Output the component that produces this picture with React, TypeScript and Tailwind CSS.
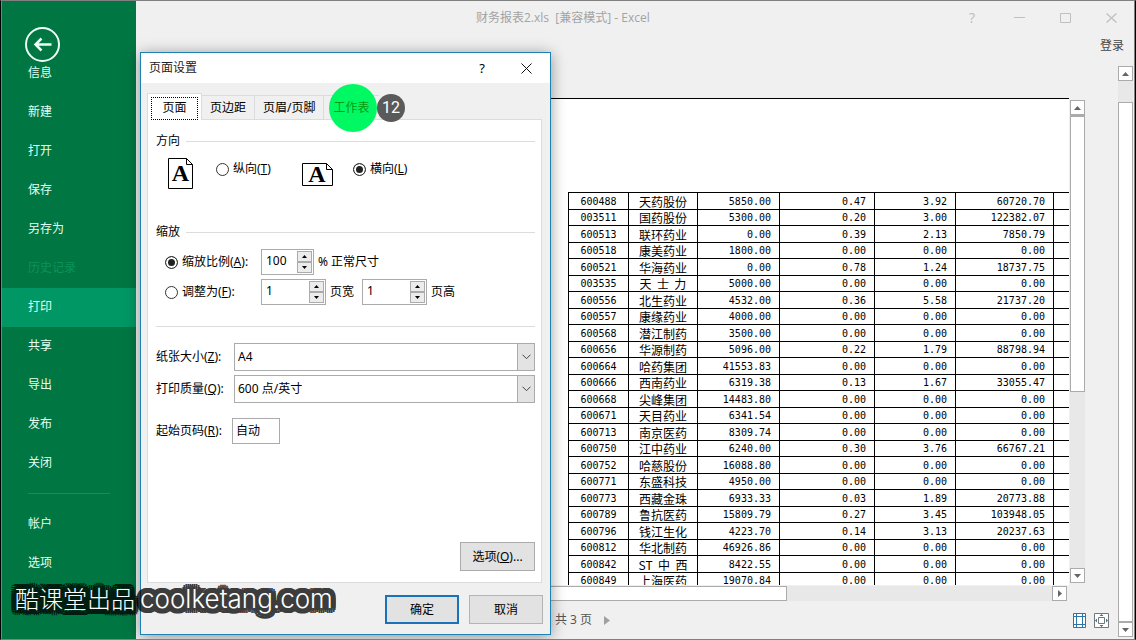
import type { ReactNode } from "react";

const uiFont = "font-['Noto_Sans','Noto_Sans_CJK_SC',sans-serif]";

const menuItems = ["信息", "新建", "打开", "保存", "另存为", "历史记录", "打印", "共享", "导出", "发布", "关闭"];
const footerItems = ["帐户", "选项"];

const rows: string[][] = [
  ["600488", "天药股份", "5850.00", "0.47", "3.92", "60720.70"],
  ["003511", "国药股份", "5300.00", "0.20", "3.00", "122382.07"],
  ["600513", "联环药业", "0.00", "0.39", "2.13", "7850.79"],
  ["600518", "康美药业", "1800.00", "0.00", "0.00", "0.00"],
  ["600521", "华海药业", "0.00", "0.78", "1.24", "18737.75"],
  ["003535", "天  士  力", "5000.00", "0.00", "0.00", "0.00"],
  ["600556", "北生药业", "4532.00", "0.36", "5.58", "21737.20"],
  ["600557", "康缘药业", "4000.00", "0.00", "0.00", "0.00"],
  ["600568", "潜江制药", "3500.00", "0.00", "0.00", "0.00"],
  ["600656", "华源制药", "5096.00", "0.22", "1.79", "88798.94"],
  ["600664", "哈药集团", "41553.83", "0.00", "0.00", "0.00"],
  ["600666", "西南药业", "6319.38", "0.13", "1.67", "33055.47"],
  ["600668", "尖峰集团", "14483.80", "0.00", "0.00", "0.00"],
  ["600671", "天目药业", "6341.54", "0.00", "0.00", "0.00"],
  ["600713", "南京医药", "8309.74", "0.00", "0.00", "0.00"],
  ["600750", "江中药业", "6240.00", "0.30", "3.76", "66767.21"],
  ["600752", "哈慈股份", "16088.80", "0.00", "0.00", "0.00"],
  ["600771", "东盛科技", "4950.00", "0.00", "0.00", "0.00"],
  ["600773", "西藏金珠", "6933.33", "0.03", "1.89", "20773.88"],
  ["600789", "鲁抗医药", "15809.79", "0.27", "3.45", "103948.05"],
  ["600796", "钱江生化", "4223.70", "0.14", "3.13", "20237.63"],
  ["600812", "华北制药", "46926.86", "0.00", "0.00", "0.00"],
  ["600842", "ST  中  西", "8422.55", "0.00", "0.00", "0.00"],
  ["600849", "上海医药", "19070.84", "0.00", "0.00", "0.00"],
];

function Arrow({ dir, className = "" }: { dir: "up" | "down" | "right"; className?: string }) {
  const d = dir === "up" ? "M0 4 3.5 0 7 4z" : dir === "down" ? "M0 0h7L3.5 4z" : "M0 0v7l4-3.5z";
  const size = dir === "right" ? [4, 7] : [7, 4];
  return (
    <svg width={size[0]} height={size[1]} viewBox={`0 0 ${size[0]} ${size[1]}`} className={className}>
      <path d={d} fill="currentColor" />
    </svg>
  );
}

function ScrollButton({ dir, label }: { dir: "up" | "down" | "right"; label: string }) {
  return (
    <button
      type="button"
      aria-label={label}
      className="flex size-[15px] shrink-0 items-center justify-center border border-[#ababab] bg-white text-[#666]"
    >
      <Arrow dir={dir} />
    </button>
  );
}

function Sidebar() {
  return (
    <nav className="flex w-[134px] shrink-0 flex-col bg-[#007643] text-xs text-[#e4fff3]">
      <div className="h-[53px] shrink-0 pt-[26px] pl-[23px]">
        <button type="button" aria-label="返回" className="block">
          <svg width="35" height="35" viewBox="0 0 35 35" fill="none" stroke="#eafff6">
            <circle cx="17.5" cy="17.5" r="16.5" strokeWidth="2" />
            <path d="M26.500 17.500H10.500M16.500 11.500l-6 6 6 6" strokeWidth="2.500" />
          </svg>
        </button>
      </div>
      {menuItems.map((item) => (
        <a
          key={item}
          href="#"
          className={
            item === "打印"
              ? "flex h-[39px] items-center bg-[#009764] pb-[2px] pl-[26px]"
              : item === "历史记录"
                ? "flex h-[39px] items-center pb-[2px] pl-[26px] text-[#0b935a]"
                : "flex h-[39px] items-center pb-[2px] pl-[26px]"
          }
        >
          {item}
        </a>
      ))}
      <hr className="my-[10px] mr-[26px] ml-[26px] border-[#0b935a]" />
      {footerItems.map((item) => (
        <a key={item} href="#" className="flex h-[39px] items-center pl-[26px]">
          {item}
        </a>
      ))}
    </nav>
  );
}

function PreviewTable() {
  return (
    <table className="mt-[93px] ml-[418px] w-[501px] table-fixed border-separate border-spacing-0 font-['DejaVu_Sans_Mono','Noto_Sans_CJK_SC',monospace] text-[10px] leading-[15px] text-black">
      <colgroup>
        <col className="w-[60px]" />
        <col className="w-[69px]" />
        <col className="w-[82px]" />
        <col className="w-[95px]" />
        <col className="w-[81px]" />
        <col className="w-[98px]" />
        <col className="w-[16px]" />
      </colgroup>
      <tbody>
        {rows.map((r) => (
          <tr key={r[0]} className="odd:h-[17px] even:h-[16px]">
            <td className="border-t border-l border-black p-0 text-center">{r[0]}</td>
            <td className="border-t border-l border-black p-0 text-center font-['Noto_Sans_CJK_SC',sans-serif] text-xs leading-[15px] whitespace-pre">
              {r[1]}
            </td>
            {r.slice(2).map((v, i) => (
              <td key={i} className="border-t border-l border-black p-0 pr-2 text-right">
                {v}
              </td>
            ))}
            <td className="border-t border-l border-black p-0" />
          </tr>
        ))}
      </tbody>
    </table>
  );
}

function Workspace() {
  return (
    <main className="flex min-w-0 flex-1 flex-col bg-[#f0f0f0]">
      <header className="flex h-[34px] shrink-0 items-center pl-[340px] text-xs text-[#a3a3a3]">
        <h1 className="font-['Open_Sans','Noto_Sans_CJK_SC',sans-serif] whitespace-pre">财务报表2.xls  [兼容模式] - Excel</h1>
        <div className="mr-[17px] ml-auto flex items-center gap-[35px] text-[#c0c0c0]">
          <button type="button" aria-label="帮助" className="mr-1 text-sm">
            ?
          </button>
          <button type="button" aria-label="最小化">
            <svg width="11" height="11" viewBox="0 0 11 11" stroke="currentColor"><path d="M0 4.500h11" /></svg>
          </button>
          <button type="button" aria-label="最大化">
            <svg width="11" height="11" viewBox="0 0 11 11" fill="none" stroke="currentColor"><path d="M.5.5h10v9H.5z" /></svg>
          </button>
          <button type="button" aria-label="关闭窗口">
            <svg width="11" height="11" viewBox="0 0 11 11" stroke="currentColor" strokeWidth="1.300"><path d="M.5.5l10 9M10.500.5l-10 9" /></svg>
          </button>
        </div>
      </header>
      <div className="flex h-[31px] shrink-0 justify-end pt-[3px] pr-[10px] text-xs leading-4 text-[#444]">
        <a href="#">登录</a>
      </div>
      <div className="flex min-h-0 flex-1">
        <section className="flex min-w-0 flex-1 flex-col pt-8 pr-[33px] pl-[14px]">
          <div className="flex min-h-0 flex-1">
            <div className="min-w-0 flex-1 overflow-hidden border-t border-black bg-white">
              <PreviewTable />
            </div>
            <div className="mt-[2px] mb-[2px] ml-px flex w-[15px] flex-col bg-[#e8e8e8]">
              <ScrollButton dir="up" label="向上滚动" />
              <div className="h-[277px] border border-t-2 border-[#ababab] bg-white" />
              <div className="mt-auto">
                <ScrollButton dir="down" label="向下滚动" />
              </div>
            </div>
          </div>
          <div className="mt-px mr-[18px] flex h-[15px] shrink-0 justify-between bg-[#e8e8e8]">
            <div className="w-[637px] border border-[#ababab] bg-white" />
            <ScrollButton dir="right" label="向右滚动" />
          </div>
          <div className="flex h-[38px] shrink-0 items-center pl-[405px] text-xs text-[#555]">
            <span>共 3 页</span>
            <button type="button" aria-label="下一页" className="ml-3 text-[#a0a0a0]">
              <svg width="6" height="9" viewBox="0 0 6 9"><path d="M0 0v9l6-4.500z" fill="currentColor" /></svg>
            </button>
            <div className="-mr-6 ml-auto flex gap-2">
              <button type="button" aria-label="显示边距">
                <svg width="13" height="15" viewBox="0 0 13 15" fill="none">
                  <path d="M.5.5h12v14H.5z" fill="#fff" stroke="#666" />
                  <path d="M3.500 0v15M9.500 0v15M0 3.500h13M0 11.500h13" stroke="#2a76a8" />
                </svg>
              </button>
              <button type="button" aria-label="缩放到页面">
                <svg width="15" height="15" viewBox="0 0 15 15" fill="none">
                  <path d="M.5.5h14v14H.5z" fill="#fff" stroke="#777" />
                  <path d="M4.500 4.500h6v6h-6z" stroke="#777" />
                  <path d="M7.500 1l2 2h-4zM7.500 14l2-2h-4zM1 7.500l2-2v4zM14 7.500l-2-2v4z" fill="#2a76a8" />
                </svg>
              </button>
            </div>
          </div>
        </section>
        <div className="mr-px mb-[2px] flex w-[15px] shrink-0 flex-col bg-[#e8e8e8]">
          <ScrollButton dir="up" label="页面向上" />
          <div className="mt-[21px] flex-1 border border-[#ababab] bg-white" />
          <ScrollButton dir="down" label="页面向下" />
        </div>
      </div>
    </main>
  );
}

function Legend({ children }: { children: ReactNode }) {
  return (
    <h3 className="flex h-5 items-center gap-[6px]">
      {children}
      <span className="h-px flex-1 bg-[#dcdcdc]" />
    </h3>
  );
}

const radioClass =
  "size-[13px] shrink-0 appearance-none rounded-full border border-[#333] bg-white checked:bg-[#222] checked:shadow-[inset_0_0_0_2px_#fff]";

function Radio({ name, id, checked, children }: { name: string; id: string; checked?: boolean; children: ReactNode }) {
  return (
    <span className="flex items-center gap-1">
      <input type="radio" name={name} id={id} defaultChecked={checked} className={radioClass} />
      <label htmlFor={id} className="whitespace-nowrap">
        {children}
      </label>
    </span>
  );
}

function Spinner({ value, label, wide }: { value: string; label: string; wide?: boolean }) {
  return (
    <span
      className={
        wide
          ? "flex h-[26px] w-[65px] border border-[#ababab] bg-white p-px"
          : "flex h-[26px] w-[53px] border border-[#ababab] bg-white p-px"
      }
    >
      <input aria-label={label} defaultValue={value} className="min-w-0 flex-1 pb-[2px] pl-[3px] outline-none" />
      <span className="flex w-[15px] flex-col">
        <button type="button" aria-label={`${label}增加`} className="flex flex-1 items-center justify-center border border-[#ababab] bg-[#ececec]">
          <svg width="5" height="3" viewBox="0 0 5 3"><path d="M0 3 2.500 0 5 3z" /></svg>
        </button>
        <button type="button" aria-label={`${label}减少`} className="flex flex-1 items-center justify-center border border-[#ababab] bg-[#ececec]">
          <svg width="5" height="3" viewBox="0 0 5 3"><path d="M0 0h5L2.500 3z" /></svg>
        </button>
      </span>
    </span>
  );
}

function SelectRow({ id, label, value }: { id: string; label: ReactNode; value: string }) {
  return (
    <div className="flex h-7 items-center">
      <label htmlFor={id} className="w-[78px] whitespace-nowrap">
        {label}
      </label>
      <span className="relative flex h-full flex-1">
        <select id={id} className="h-full w-full appearance-none border border-[#ababab] bg-white pl-[3px] outline-none">
          <option>{value}</option>
        </select>
        <span className="pointer-events-none absolute inset-y-0 right-0 flex w-[18px] items-center justify-center border border-[#ababab] bg-[#e3e3e3]">
          <svg width="9" height="6" viewBox="0 0 9 6" fill="none" stroke="#444"><path d="M.5.7l4 4 4-4" /></svg>
        </span>
      </span>
    </div>
  );
}

function PageIcon({ landscape }: { landscape?: boolean }) {
  const w = landscape ? 31 : 25;
  const h = landscape ? 23 : 31;
  return (
    <svg width={w} height={h} viewBox={`0 0 ${w} ${h}`} fill="none" stroke="#000" className="block overflow-visible">
      <path d={`M.5.5H${w - 6.5}l6 6V${h - 0.5}H.5z`} fill="#fff" />
      <path d={`M${w - 6.5}.5v6h6`} />
      <text
        x={landscape ? 15 : 12.5}
        y={landscape ? 19 : 23}
        textAnchor="middle"
        fill="#000"
        stroke="none"
        className="font-['Liberation_Serif',serif] text-[24px] font-bold"
      >
        A
      </text>
    </svg>
  );
}

const inactiveTab = "flex h-6 items-center border-t border-r border-[#dcdcdc] px-2";

function PageSetupDialog() {
  return (
    <section
      role="dialog"
      aria-label="页面设置"
      className="absolute top-[51px] left-[139px] w-[411px] border border-[#1c82b4] bg-[#f0f0f0] text-xs leading-4 text-black shadow-[0_2px_14px_rgba(0,0,0,0.4)]"
    >
      <div className="flex h-[30px] items-center bg-white pr-[18px] pl-2">
        <h2 className="text-[#222]">页面设置</h2>
        <button type="button" aria-label="帮助" className="ml-auto text-[13px]">
          ?
        </button>
        <button type="button" aria-label="关闭" className="ml-9">
          <svg width="11" height="11" viewBox="0 0 11 11" stroke="#111"><path d="M.5.5l10 10M10.500.5l-10 10" /></svg>
        </button>
      </div>
      <div className="px-[6px] pt-[10px]">
        <div role="tablist" className="relative flex h-[26px] items-end">
          <button
            role="tab"
            type="button"
            aria-selected="true"
            className="z-10 -mb-px flex h-[27px] w-[55px] justify-center border border-b-0 border-[#dcdcdc] bg-white px-[3px] pt-[3px]"
          >
            <span className="w-full border border-dotted border-black leading-[19px]">页面</span>
          </button>
          <button role="tab" type="button" className={inactiveTab}>
            页边距
          </button>
          <button role="tab" type="button" className={inactiveTab}>
            页眉/页脚
          </button>
          <button role="tab" type="button" className="flex h-6 items-center border-t border-[#dcdcdc] px-[9px] text-[#0a9a10]">
            <span className="z-30">工作表</span>
          </button>
          <span className="absolute -top-[9px] left-[182px] z-20 size-12 rounded-full bg-[#00f963]" />
          <span className="absolute top-px left-[230px] z-20 flex size-7 items-center justify-center rounded-full bg-[#5a5a5a] font-['Roboto',sans-serif] text-base text-white">
            12
          </span>
        </div>
        <div className="mr-[2px] border border-[#dcdcdc] bg-white pt-[11px] pr-[6px] pb-[11px] pl-2">
          <Legend>方向</Legend>
          <div className="mt-[7px] flex h-8 pl-3">
            <PageIcon />
            <div className="ml-[23px] flex h-[22px] items-center">
              <Radio name="orient" id="portrait">
                纵向(<u>T</u>)
              </Radio>
            </div>
            <div className="ml-[31px] self-center">
              <PageIcon landscape />
            </div>
            <div className="ml-5 flex h-[22px] items-center">
              <Radio name="orient" id="landscape" checked>
                横向(<u>L</u>)
              </Radio>
            </div>
          </div>
          <div className="mt-8">
            <Legend>缩放</Legend>
          </div>
          <div className="mt-[7px] grid grid-cols-[96px_1fr] items-center gap-y-1 pl-[9px]">
            <Radio name="scale" id="adjust" checked>
              缩放比例(<u>A</u>):
            </Radio>
            <div className="flex items-center gap-1">
              <Spinner value="100" label="缩放比例" />% 正常尺寸
            </div>
            <Radio name="scale" id="fit">
              调整为(<u>F</u>):
            </Radio>
            <div className="flex items-center gap-1">
              <Spinner value="1" label="页宽" wide />
              页宽
              <span className="ml-1">
                <Spinner value="1" label="页高" wide />
              </span>
              页高
            </div>
          </div>
          <hr className="mt-[21px] border-[#dcdcdc]" />
          <div className="mt-4 flex flex-col gap-1">
            <SelectRow id="paper" label={<>纸张大小(<u>Z</u>):</>} value="A4" />
            <SelectRow id="quality" label={<>打印质量(<u>Q</u>):</>} value="600 点/英寸" />
          </div>
          <div className="mt-[15px] flex items-center">
            <label htmlFor="first" className="w-[76px] whitespace-nowrap">
              起始页码(<u>R</u>):
            </label>
            <input id="first" defaultValue="自动" className="h-[26px] w-12 border border-[#ababab] bg-white pb-[2px] pl-[3px] outline-none" />
          </div>
          <div className="mt-[98px] flex justify-end">
            <button type="button" className="h-[29px] w-[75px] border border-[#ababab] bg-[#e2e2e2]">
              选项(<u>O</u>)...
            </button>
          </div>
        </div>
      </div>
      <div className="flex justify-end gap-[10px] pt-3 pr-[7px] pb-[10px]">
        <button type="button" className="h-[29px] w-[74px] border-2 border-[#1a72b8] bg-[#e2e2e2]">
          确定
        </button>
        <button type="button" className="h-[29px] w-[74px] border border-[#b4b4b4] bg-[#e2e2e2]">
          取消
        </button>
      </div>
    </section>
  );
}

const outlined =
  "relative isolate before:absolute before:inset-0 before:-z-10 before:text-black before:opacity-75 before:content-[attr(data-text)] before:[text-shadow:5px_0_#000,-5px_0_#000,0_5px_#000,0_-5px_#000,4px_4px_#000,-4px_4px_#000,4px_-4px_#000,-4px_-4px_#000,5px_2px_#000,-5px_2px_#000,5px_-2px_#000,-5px_-2px_#000,2px_5px_#000,-2px_5px_#000,2px_-5px_#000,-2px_-5px_#000,3px_0_#000,-3px_0_#000,0_3px_#000,0_-3px_#000,2px_2px_#000,-2px_2px_#000,2px_-2px_#000,-2px_-2px_#000]";

export default function App() {
  return (
    <div className={`relative flex h-screen overflow-hidden border-x border-t border-b border-x-black border-y-[#808080] bg-[#808080] px-px ${uiFont}`}>
      <Sidebar />
      <Workspace />
      <PageSetupDialog />
      <p className="absolute top-[580px] left-[14px] z-30 flex items-baseline gap-[5px] font-['Inter','Noto_Sans_CJK_SC',sans-serif] leading-9 font-light whitespace-nowrap text-white">
        <span data-text="酷课堂出品" className={`text-[24px] ${outlined}`}>
          酷课堂出品
        </span>
        <span data-text="coolketang.com" className={`text-[26px] ${outlined}`}>
          coolketang.com
        </span>
      </p>
    </div>
  );
}
